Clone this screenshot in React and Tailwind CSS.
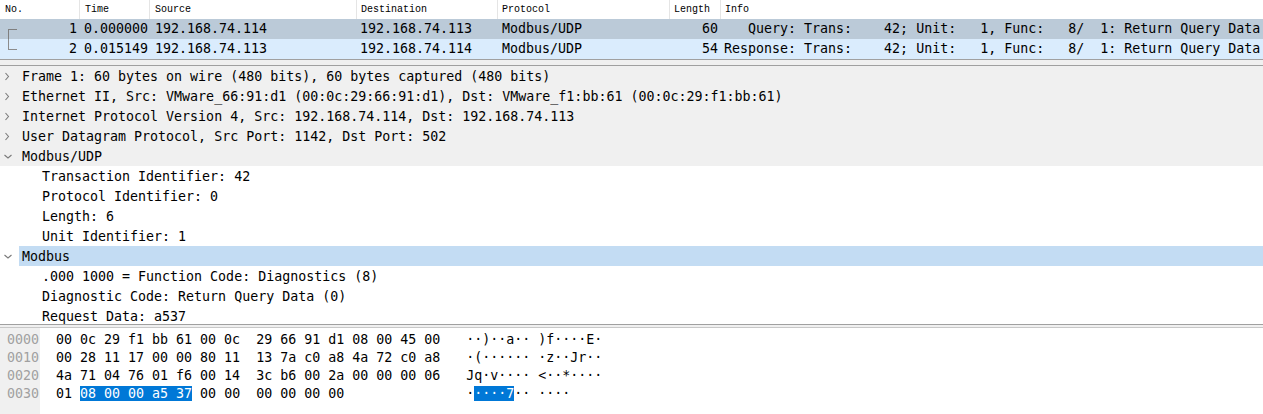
import React from "react";

const mono = { fontFamily: '"DejaVu Sans Mono", "Liberation Mono", monospace' };
const hdrFont = { fontFamily: '"Liberation Mono", "DejaVu Sans Mono", monospace' };

const cols = "grid grid-cols-[80px_70px_207px_141px_172px_51px_1fr]";

const headers = [
  { t: "No.", cls: "pl-[5px]" },
  { t: "Time", cls: "pl-[5px]" },
  { t: "Source", cls: "pl-[5px]" },
  { t: "Destination", cls: "pl-[4px]" },
  { t: "Protocol", cls: "pl-[4px]" },
  { t: "Length", cls: "pl-[4px]" },
  { t: "Info", cls: "pl-[4px]" },
];

const packets = [
  {
    no: "1",
    time: "0.000000",
    src: "192.168.74.114",
    dst: "192.168.74.113",
    proto: "Modbus/UDP",
    len: "60",
    info: "   Query: Trans:    42; Unit:   1, Func:   8/  1: Return Query Data",
    bg: "bg-[#bbcad8]",
    first: true,
  },
  {
    no: "2",
    time: "0.015149",
    src: "192.168.74.113",
    dst: "192.168.74.114",
    proto: "Modbus/UDP",
    len: "54",
    info: "Response: Trans:    42; Unit:   1, Func:   8/  1: Return Query Data",
    bg: "bg-[#daecfd]",
    first: false,
  },
];

function ChevronRight() {
  return (
    <svg width="19" height="20" viewBox="0 0 19 20" className="shrink-0">
      <path d="M5.5 7 L8.5 10.5 L5.5 14" fill="none" stroke="#7a7a7a" strokeWidth="1.1" />
    </svg>
  );
}

function ChevronDown() {
  return (
    <svg width="19" height="20" viewBox="0 0 19 20" className="shrink-0">
      <path d="M4.5 9 L8 12 L11.5 9" fill="none" stroke="#7a7a7a" strokeWidth="1.1" />
    </svg>
  );
}

const tree = [
  { lvl: 0, exp: false, t: "Frame 1: 60 bytes on wire (480 bits), 60 bytes captured (480 bits)" },
  { lvl: 0, exp: false, t: "Ethernet II, Src: VMware_66:91:d1 (00:0c:29:66:91:d1), Dst: VMware_f1:bb:61 (00:0c:29:f1:bb:61)" },
  { lvl: 0, exp: false, t: "Internet Protocol Version 4, Src: 192.168.74.114, Dst: 192.168.74.113" },
  { lvl: 0, exp: false, t: "User Datagram Protocol, Src Port: 1142, Dst Port: 502" },
  { lvl: 0, exp: true, t: "Modbus/UDP" },
  { lvl: 1, t: "Transaction Identifier: 42" },
  { lvl: 1, t: "Protocol Identifier: 0" },
  { lvl: 1, t: "Length: 6" },
  { lvl: 1, t: "Unit Identifier: 1" },
  { lvl: 0, exp: true, sel: true, t: "Modbus" },
  { lvl: 1, t: ".000 1000 = Function Code: Diagnostics (8)" },
  { lvl: 1, t: "Diagnostic Code: Return Query Data (0)" },
  { lvl: 1, t: "Request Data: a537" },
];

const hexRows = [
  { off: "0000", pre: "00 0c 29 f1 bb 61 00 0c  29 66 91 d1 08 00 45 00", ascii: "··)··a·· )f····E·" },
  { off: "0010", pre: "00 28 11 17 00 00 80 11  13 7a c0 a8 4a 72 c0 a8", ascii: "·(······ ·z··Jr··" },
  { off: "0020", pre: "4a 71 04 76 01 f6 00 14  3c b6 00 2a 00 00 00 06", ascii: "Jq·v···· <··*····" },
];

export default function App() {
  return (
    <div className="w-[1263px] h-[414px] overflow-hidden bg-white flex flex-col text-black" style={mono}>
      {/* Packet list */}
      <div className="shrink-0">
        <div className={`${cols} h-[19px] bg-white text-[10px]`} style={hdrFont}>
          {headers.map((h, i) => (
            <div
              key={i}
              className={`${h.cls} flex items-center ${i < headers.length - 1 ? "border-r border-[#e5e5e5]" : ""} whitespace-pre overflow-hidden`}
            >
              {h.t}
            </div>
          ))}
        </div>
        {packets.map((p, i) => (
          <div key={i} className={`${cols} h-[20px] ${p.bg} text-[13.3px] leading-[20px] whitespace-pre`}>
            <div className="relative text-right pr-[3px]">
              {p.first ? (
                <div className="absolute left-[8px] top-[10px] w-[9px] h-[10px] border-l border-t border-[#7f7f7f]" />
              ) : (
                <div className="absolute left-[8px] top-0 w-[9px] h-[11px] border-l border-b border-[#8c8c8c]" />
              )}
              {p.no}
            </div>
            <div className="pl-[4px] overflow-hidden">{p.time}</div>
            <div className="pl-[5px] overflow-hidden">{p.src}</div>
            <div className="pl-[3px] overflow-hidden">{p.dst}</div>
            <div className="pl-[4px] overflow-hidden">{p.proto}</div>
            <div className="text-right pr-[3px] overflow-hidden">{p.len}</div>
            <div className="pl-[3px] overflow-hidden">{p.info}</div>
          </div>
        ))}
      </div>

      {/* splitter */}
      <div className="shrink-0 h-px bg-[#a0a0a0]" />
      <div className="shrink-0 h-[5px] bg-[#f0f0f0]" />
      <div className="shrink-0 h-px bg-[#a0a0a0]" />

      {/* Detail tree */}
      <div className="shrink-0 h-[258px] overflow-hidden bg-white text-[13.3px] leading-[20px]">
        {tree.map((r, i) => {
          if (r.lvl === 0) {
            return (
              <div key={i} className={`flex h-[20px] ${r.sel ? "bg-white" : "bg-[#f0f0f0]"}`}>
                {r.exp ? <ChevronDown /> : <ChevronRight />}
                <div className={`flex-1 pl-[3px] pt-px whitespace-pre overflow-hidden ${r.sel ? "bg-[#c3dcf3]" : ""}`}>{r.t}</div>
              </div>
            );
          }
          return (
            <div key={i} className="h-[20px] pl-[42px] pt-px whitespace-pre overflow-hidden">
              {r.t}
            </div>
          );
        })}
      </div>

      {/* splitter */}
      <div className="shrink-0 h-px bg-[#a0a0a0]" />
      <div className="shrink-0 h-[2px] bg-[#f0f0f0]" />
      <div className="shrink-0 h-px bg-[#c8c8c8]" />

      {/* Hex pane */}
      <div className="flex-1 flex text-[13.3px] leading-[18px] whitespace-pre">
        <div className="w-[40px] bg-[#f0f0f0] pt-[3px] pl-[7px] text-[#a0a0a0]">
          {["0000", "0010", "0020", "0030"].map((o) => (
            <div key={o} className="h-[18px]">{o}</div>
          ))}
        </div>
        <div className="pl-[16px] pt-[3px]">
          {hexRows.map((r) => (
            <div key={r.off} className="h-[18px] flex">
              <span>{r.pre}</span>
              <span className="ml-[26px]">{r.ascii}</span>
            </div>
          ))}
          <div className="h-[18px] flex">
            <span>
              {"01 "}
              <span className="bg-[#0078d7] text-white">{"08 00 00 a5 37"}</span>
              {" 00 00  00 00 00 00            "}
            </span>
            <span className="ml-[26px]">
              {"·"}
              <span className="bg-[#0078d7] text-white">{"····7"}</span>
              {"·· ····"}
            </span>
          </div>
        </div>
      </div>
    </div>
  );
}
